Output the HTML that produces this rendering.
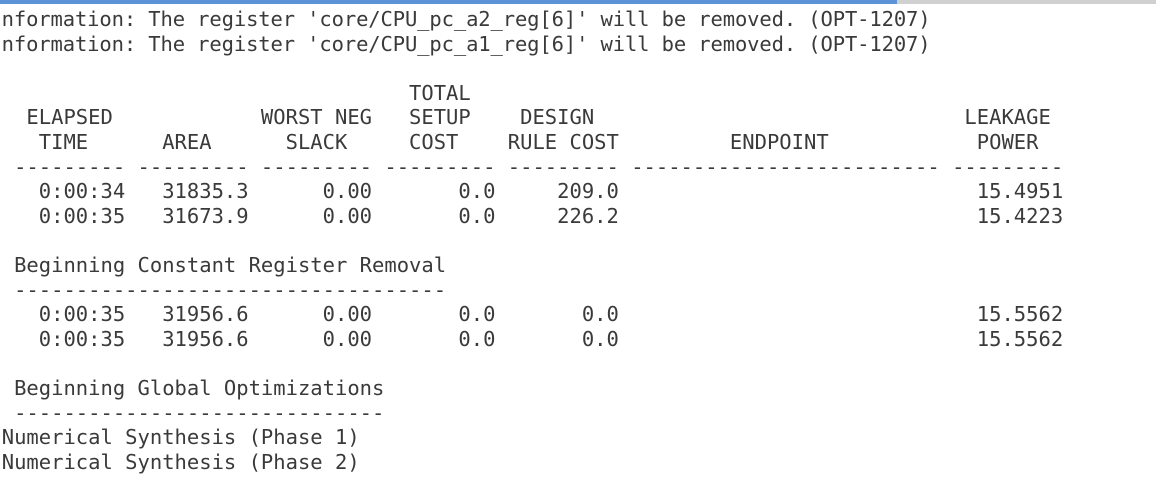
<!DOCTYPE html>
<html><head><meta charset="utf-8"><style>
html,body{margin:0;padding:0;width:1156px;height:477px;overflow:hidden;background:#fff;}
.bar{position:absolute;left:0;top:0;width:1156px;height:4px;background:#d0d0d0;}
.bar i{position:absolute;left:0;top:0;width:897px;height:4px;background:#5b93d6;}
pre{position:absolute;left:-10.6px;top:7px;margin:0;font-family:"DejaVu Sans Mono","Liberation Mono",monospace;font-size:20.5px;line-height:24.6px;color:#3a3a3a;white-space:pre;}
pre .i{letter-spacing:-0.12px;}
</style></head><body>
<div class="bar"><i></i></div>
<pre><span class="i">Information: The register 'core/CPU_pc_a2_reg[6]' will be removed. (OPT-1207)
Information: The register 'core/CPU_pc_a1_reg[6]' will be removed. (OPT-1207)</span>

                                  TOTAL
   ELAPSED            WORST NEG   SETUP    DESIGN                              LEAKAGE
    TIME      AREA      SLACK     COST    RULE COST         ENDPOINT            POWER
  --------- --------- --------- --------- --------- ------------------------- ---------
    0:00:34   31835.3      0.00       0.0     209.0                             15.4951
    0:00:35   31673.9      0.00       0.0     226.2                             15.4223

  Beginning Constant Register Removal
  -----------------------------------
    0:00:35   31956.6      0.00       0.0       0.0                             15.5562
    0:00:35   31956.6      0.00       0.0       0.0                             15.5562

  Beginning Global Optimizations
  ------------------------------
 Numerical Synthesis (Phase 1)
 Numerical Synthesis (Phase 2)</pre>
</body></html>
